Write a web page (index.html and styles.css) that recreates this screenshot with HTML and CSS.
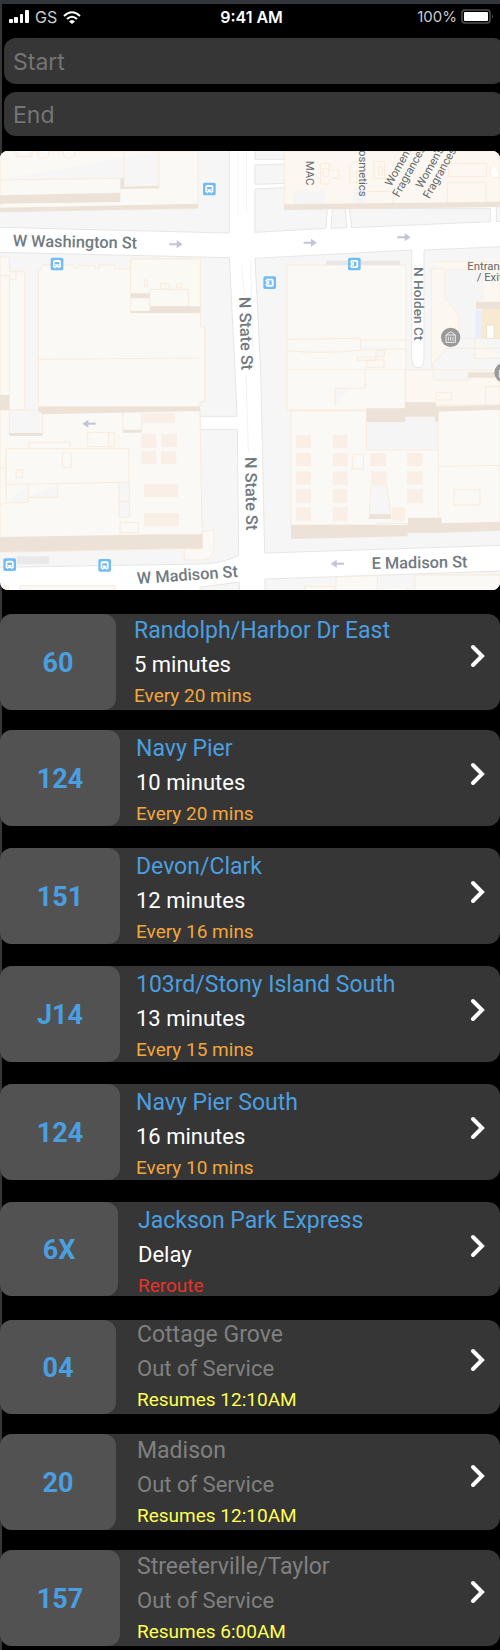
FILE: index.html
```html
<!DOCTYPE html>
<html lang="en">
<head>
<meta charset="utf-8">
<meta name="viewport" content="width=device-width, initial-scale=1">
<title>Transit</title>
<link rel="stylesheet" href="styles.css">
</head>
<body>
<header class="status">
  <div class="status-side">
    <svg class="icon" width="20" height="14" viewBox="0 0 20 14" aria-hidden="true"><g fill="#fff"><rect x="0" y="9" width="4" height="4" rx="1"/><rect x="5" y="7" width="4" height="6" rx="1"/><rect x="11" y="4" width="3" height="9" rx="1"/><rect x="16" y="0" width="4" height="13" rx="1"/></g></svg>
    <span class="carrier">GS</span>
    <svg class="icon" width="18" height="13" viewBox="0 0 18 13" aria-hidden="true"><g fill="none" stroke="#fff" stroke-width="2"><path d="M1 5Q9-2.500 17 5"/><path d="M4 8Q9 3.500 14 8"/></g><path d="M6 10.500Q9 7.500 12 10.500L9 13Z" fill="#fff"/></svg>
  </div>
  <time class="clock">9:41 AM</time>
  <div class="status-side status-end">
    <span class="percent">100%</span>
    <svg class="icon" width="33" height="16" viewBox="0 0 33 16" aria-hidden="true"><rect x="1" y="1" width="28" height="13" rx="3" fill="none" stroke="#505050" stroke-width="1.500"/><rect x="3" y="3" width="24" height="9" rx="1" fill="#fff"/><path d="M31 5.500Q33 7.500 31 9.500Z" fill="#505050"/></svg>
  </div>
</header>
<form class="search">
  <input class="field" type="text" placeholder="Start" aria-label="Start">
  <input class="field field-end" type="text" placeholder="End" aria-label="End">
</form>
<main>
<svg class="map" viewBox="0 18 1500 1317" role="img" aria-label="Street map">
  <defs>
    <g id="bus"><rect x="-19" y="-19" width="38" height="38" rx="5" fill="#72bcf6"/><path d="M-12 10V-6Q-12-12-6-12H6Q12-12 12-6V10H8V13H4V10H-4V13H-8V10Z" fill="#fff"/><rect x="-7" y="-6" width="14" height="7" fill="#72bcf6"/><path d="M-8 5h4M4 5h4" stroke="#72bcf6" stroke-width="3"/></g>
    <g id="arrow"><path d="M-20 0H8" stroke="#c3c4d9" stroke-width="6"/><path d="M2-12L20 0 2 12Z" fill="#c3c4d9"/></g>
    <g id="poi"><circle r="29" fill="#999"/><path d="M-14-7L0-17 14-7M-14-7H14V15H-14ZM-7-2V10M0-2V10M7-2V10" fill="none" stroke="#eee" stroke-width="3"/></g>
  </defs>
  <rect y="18" width="1500" height="1317" fill="#fff"/>
  <g class="block">
    <path d="M-5 10H688V264L-5 247ZM765 10H855V43H765ZM765 60L855 57V115L765 118ZM765 132L855 128V190H982L978 250 765 262ZM997 190H1036L1040 248 993 250ZM1048 190H1471V230L1055 248ZM1489 180H1510V228L1489 230Z"/>
    <path d="M-5 322L688 338 705 675 711 814H600V853H712L716 1232Q665 1256 600 1257L-5 1267Z"/>
    <path d="M765 340L1235 315V640Q1237 668 1254 668Q1272 668 1272 640V315L1510 305V1201L794 1224 782 675Z"/>
    <path d="M795 1302L1510 1278V1345H795ZM600 1327L718 1311V1345H600Z"/>
  </g>
  <g class="building">
    <path d="M0 18H594V190L0 200ZM0 105L372 100V130H477V18M372 18V100"/>
    <path d="M48 18V34H96V18M112 18v14q14 18 34 0V18M190 18v12q15 20 36 0V18"/>
    <path d="M0 336H28V380H74V675 795H0ZM28 390V795M28 380h20v24h-20M0 392h28"/>
    <path d="M115 375H125V360H220V370H235V362H285V370H298V360H342V372H392V342H601V545H614V770H600V785H115ZM115 643L598 639"/>
    <path class="fainter" d="M392 342H601V502H392ZM449 433H565V484H449ZM433 405h10v20h-10ZM482 416h26v16h-26ZM530 415h16v13h-16Z"/>
    <path d="M0 795H600L606 1160V1210L0 1222ZM18 911H387V1012L18 1018ZM28 795V866H128V797M369 797h56v62h-56ZM86 911V892H211V905M263 862h80v43h-80ZM326 862v43M187 924h27v43h-27ZM48 975h20v22h-20ZM0 970h14M18 910V1075L0 1078M18 1073H85V1020M85 1057h88v-37M357 1012V1117H388V1012M357 1069h31M360 1133h55v30h-55Z"/>
    <path d="M606 1160L642 1155V1205Q642 1245 602 1245H553V1212H606Z"/>
    <path d="M60 1345V1322H345V1345M0 1345V1325H25V1345"/>
    <path class="warm" d="M853 18H1500V182L853 192ZM962 55h28v20h27v25h-28v17h-28ZM969 70h17v24h-17ZM1050 60q18-22 48 0v18h-28v36h-20ZM1122 50h32v50h-32ZM1135 65h12v25h-12ZM1345 55h115v40h-115ZM1343 112h115v68M1343 112v70M1100 140h80v42M1480 60q-20 20 0 38h20"/>
    <path d="M861 360H1218V675H861ZM861 583L1082 580V615L1219 612M861 617Q960 628 1080 616M1082 585h135M1073 636h80v-20h-25v30h-55ZM1100 645h52v22h-52Z"/>
    <path d="M861 675V795H1216V675M1005 784V730H1095V675"/>
    <path d="M873 797H1099V915H1315V797L1500 792V1135L1325 1137 1132 1134V1140H873ZM1317 964L1500 961M1100 910V800M1315 905V1120M1362 1034h78v46h-78ZM1057 928h34v44h-34ZM1113 1020L1108 1110H1173L1160 1020Z"/>
    <path class="warm" d="M1300 350H1500V580H1370L1298 655V675H1500V780H1216V675H1295V372H1335V460L1376 510V580H1500M1335 610H1500M1425 580v60h75M1335 375H1500M1448 375v94M1216 775H1310M1308 765v-22h47v22h-47M1300 680V705H1405V680M1457 725h43M1457 725v50"/>
    <path d="M1008 1345V1296L1132 1292V1345M1245 1345V1290H1500V1345M915 1345v-20h90v12h215v-10"/>
  </g>
  <path fill="#f5f5f5" d="M1335 375H1448V470H1428V580H1378V510L1335 460ZM1105 832L1315 815V910H1105ZM882 140l32-8 14 10h24l12-8h12v66h-23V185h-71ZM1060 132q5-15 38-10V180h-38Z"/>
  <g fill="#ece2d8">
    <path d="M0 151L361 143V171L0 176ZM0 188L594 176V190L0 202ZM361 100H372V125L477 122V128L361 132ZM392 445H449V460H392ZM449 484H601V504H392V498H449ZM115 785H600V798L128 808 115 798ZM0 750H28V795H0ZM28 864H128V873H28ZM369 854H425V863H369ZM0 1176L490 1168H608V1209L0 1221Z"/>
    <path d="M853 178L1500 170V186L853 195ZM1100 790H1216V772H1305L1315 800V830H1305V815H1216V831H1100ZM1305 785L1500 780V794L1305 800ZM873 1140H1224V1118H1325V1135L1500 1130V1157L1325 1163H1224L1222 1174 873 1182ZM1110 1108H1173V1122H1105Z"/>
    <path d="M979 347H1200V359H979Z" fill="#e6e6e6"/><path d="M50 1234H148V1258H50Z" fill="#e9e9e9"/>
    <path d="M1428 470H1500V492H1428ZM1405 682H1500V698H1405Z"/>
  </g>
  <path fill="#f7ead0" d="M1446 492H1500V580H1446Z"/><path fill="#e8ecfb" d="M1427 495H1446V579H1427Z"/>
  <path fill="#fff" stroke="#eee0cc" stroke-width="3" d="M1460 540h22v40h-22Z"/>
  <path fill="#f9efe7" d="M427 805h98v28h-98ZM424 867h45v41h-45ZM484 867h47v39h-47ZM424 919h45v39h-45ZM482 919h47v39h-47ZM432 1016h102v40h-102ZM432 1104h105v39h-105Z"/>
  <g fill="#f9efe7"><path id="cells" d="M888 870h45v40h-45ZM888 924h45v40h-45ZM888 979h45v40h-45ZM888 1033h45v40h-45ZM888 1087h45v40h-45Z"/><use href="#cells" x="110"/><path d="M1111 924h47v40h-47ZM1113 979h47v40h-47ZM1221 924h47v40h-47ZM1221 979h47v40h-47ZM1221 1033h47v40h-47ZM1176 1087h40v40h-40Z"/></g>
  <g fill="none" stroke="#f2f4f4" stroke-width="3"><path d="M714 18V210M740 18V200M725 360L734 455M738 690L745 920M752 345L760 675"/></g>
  <use href="#arrow" transform="translate(528 298)"/><use href="#arrow" transform="translate(931 293)"/><use href="#arrow" transform="translate(1212 277)"/>
  <use href="#arrow" transform="translate(267 836) rotate(180)"/><use href="#arrow" transform="translate(1012 1256) rotate(180)"/>
  <use href="#bus" transform="translate(628 132)"/><use href="#bus" transform="translate(171 357)"/>
  <use href="#bus" transform="translate(809 413) rotate(90)"/><use href="#bus" transform="translate(1063 357) rotate(90)"/>
  <use href="#bus" transform="translate(29 1259)"/><use href="#bus" transform="translate(314 1261)"/>
  <use href="#poi" transform="translate(1352 577)"/><use href="#poi" transform="translate(1512 683)"/>
  <g class="street">
    <text transform="translate(38 304) rotate(1)">W Washington St</text>
    <text transform="translate(717 456) rotate(88)">N State St</text>
    <text transform="translate(735 936) rotate(89)">N State St</text>
    <text transform="translate(412 1317) rotate(-4)">W Madison St</text>
    <text transform="translate(1115 1272) rotate(-1)">E Madison St</text>
    <text class="small-street" transform="translate(1241 366) rotate(90)">N Holden Ct</text>
  </g>
  <g class="place">
    <text transform="translate(918 47) rotate(90)">MAC</text>
    <text transform="translate(1076 -7) rotate(90)">Cosmetics</text>
    <text transform="translate(1174 126) rotate(-61)">Women's</text>
    <text transform="translate(1196 158) rotate(-61)">Fragrances</text>
    <text transform="translate(1266 132) rotate(-61)">Women's</text>
    <text transform="translate(1288 163) rotate(-61)">Fragrances</text>
    <text x="1402" y="376">Entrance</text>
    <text x="1430" y="409">/ Exit</text>
  </g>
</svg>
<ul class="routes">
  <li><a class="route route-first" href="#60"><span class="badge">60</span><span class="info"><span class="name">Randolph/Harbor Dr East</span><span class="eta">5 minutes</span><span class="note">Every 20 mins</span></span><svg class="chevron" viewBox="0 0 16 24"><path d="M3 3L12 12L3 21"/></svg></a></li>
  <li><a class="route low wide" href="#124"><span class="badge">124</span><span class="info"><span class="name">Navy Pier</span><span class="eta">10 minutes</span><span class="note">Every 20 mins</span></span><svg class="chevron" viewBox="0 0 16 24"><path d="M3 3L12 12L3 21"/></svg></a></li>
  <li><a class="route low wide" href="#151"><span class="badge">151</span><span class="info"><span class="name">Devon/Clark</span><span class="eta">12 minutes</span><span class="note">Every 16 mins</span></span><svg class="chevron" viewBox="0 0 16 24"><path d="M3 3L12 12L3 21"/></svg></a></li>
  <li><a class="route low wide" href="#J14"><span class="badge">J14</span><span class="info"><span class="name">103rd/Stony Island South</span><span class="eta">13 minutes</span><span class="note">Every 15 mins</span></span><svg class="chevron" viewBox="0 0 16 24"><path d="M3 3L12 12L3 21"/></svg></a></li>
  <li><a class="route low wide" href="#124s"><span class="badge">124</span><span class="info"><span class="name">Navy Pier South</span><span class="eta">16 minutes</span><span class="note">Every 10 mins</span></span><svg class="chevron" viewBox="0 0 16 24"><path d="M3 3L12 12L3 21"/></svg></a></li>
  <li><a class="route low short medium" href="#6X"><span class="badge">6X</span><span class="info"><span class="name">Jackson Park Express</span><span class="eta">Delay</span><span class="note alert">Reroute</span></span><svg class="chevron" viewBox="0 0 16 24"><path d="M3 3L12 12L3 21"/></svg></a></li>
</ul>
<ul class="routes closed">
  <li><a class="route high short" href="#04"><span class="badge">04</span><span class="info"><span class="name">Cottage Grove</span><span class="eta">Out of Service</span><span class="note">Resumes 12:10AM</span></span><svg class="chevron" viewBox="0 0 16 24"><path d="M3 3L12 12L3 21"/></svg></a></li>
  <li><a class="route" href="#20"><span class="badge">20</span><span class="info"><span class="name">Madison</span><span class="eta">Out of Service</span><span class="note">Resumes 12:10AM</span></span><svg class="chevron" viewBox="0 0 16 24"><path d="M3 3L12 12L3 21"/></svg></a></li>
  <li><a class="route wide" href="#157"><span class="badge">157</span><span class="info"><span class="name">Streeterville/Taylor</span><span class="eta">Out of Service</span><span class="note">Resumes 6:00AM</span></span><svg class="chevron" viewBox="0 0 16 24"><path d="M3 3L12 12L3 21"/></svg></a></li>
</ul>
</main>
</body>
</html>
```
FILE: styles.css
```css
* { box-sizing: border-box; }
body {
  margin: 0;
  background: linear-gradient(to right, #363636 2px, #000 2px);
  color: #fff;
  font-family: Roboto, sans-serif;
  overflow-x: hidden;
}
.status {
  display: grid;
  grid-template-columns: 1fr auto 1fr;
  align-items: center;
  height: 38px;
  padding: 0 6px 8px 9px;
  border-top: 4px solid #32363a;
  font: 16px/24px Inter, sans-serif;
}
.status-side { display: flex; align-items: center; gap: 6px; color: #ccc; }
.status-end { justify-content: flex-end; gap: 4px; font-size: 15px; }
.icon { display: block; }
.clock { font-weight: 600; }
.search { display: grid; gap: 8px; margin-left: 4px; margin-right: -5px; }
.field {
  width: 100%;
  height: 46px;
  padding: 2px 9px 0;
  border: 0;
  border-radius: 12px;
  background: #363636;
  color: #fff;
  font: 23px Inter, sans-serif;
}
.field-end { height: 44px; }
.field::placeholder { color: #757575; opacity: 1; }
.map { display: block; width: 100%; margin-top: 15px; border-radius: 8px; }
.block { fill: #f6f6f6; stroke: #e6e6e4; stroke-width: 3; }
.building { fill: #fbf9f5; stroke: #f9ebdc; stroke-width: 3; }
.fainter { fill: #fbf9f4; }
.warm { fill: #fcf8f1; }
.street { fill: #717a80; font-size: 49px; font-weight: 500; }
.small-street { font-size: 41px; }
.place { fill: #62686c; font-size: 34px; }
.routes {
  display: grid;
  gap: 22px;
  margin: 24px 0;
  padding: 0;
  list-style: none;
}
.closed { gap: 20px; margin-bottom: 4px; }
.route {
  display: flex;
  height: 96px;
  border-radius: 12px;
  background: #363636;
  color: #fff;
  text-decoration: none;
  --shift: 0px;
}
.route-first { margin-bottom: -2px; }
.short { height: 94px; }
.low { --shift: 2px; }
.high { --shift: -2px; }
.badge {
  display: flex;
  flex: none;
  align-items: center;
  justify-content: center;
  width: 116px;
  padding-top: 2px;
  border-radius: 12px;
  background: #525252;
  color: #4a9fe0;
  font-size: 27px;
  font-weight: 700;
}
.medium .badge { width: 118px; }
.wide .badge { width: 120px; }
.info {
  display: flex;
  flex: 1;
  flex-direction: column;
  margin-left: 20px;
  padding-top: calc(1px + var(--shift));
}
.high .info { padding-top: 0; margin-top: -1px; }
.wide .info { margin-left: 16px; }
.closed .info { margin-left: 21px; }
.closed .wide .info { margin-left: 17px; }
.route-first .info { margin-left: 18px; }
.name { color: #4a9fe0; font-size: 23px; line-height: 32px; }
.eta { font-size: 22px; line-height: 36px; }
.note { color: #f2a73b; font-size: 19px; line-height: 26px; }
.alert { color: #e63329; }
.closed .name, .closed .eta { color: #808080; }
.closed .note { color: #ffff54; }
.chevron {
  width: 16px;
  height: 24px;
  margin: calc(30px + var(--shift)) 14px 0 0;
  fill: none;
  stroke: #fff;
  stroke-width: 4;
  stroke-linecap: round;
}
```
